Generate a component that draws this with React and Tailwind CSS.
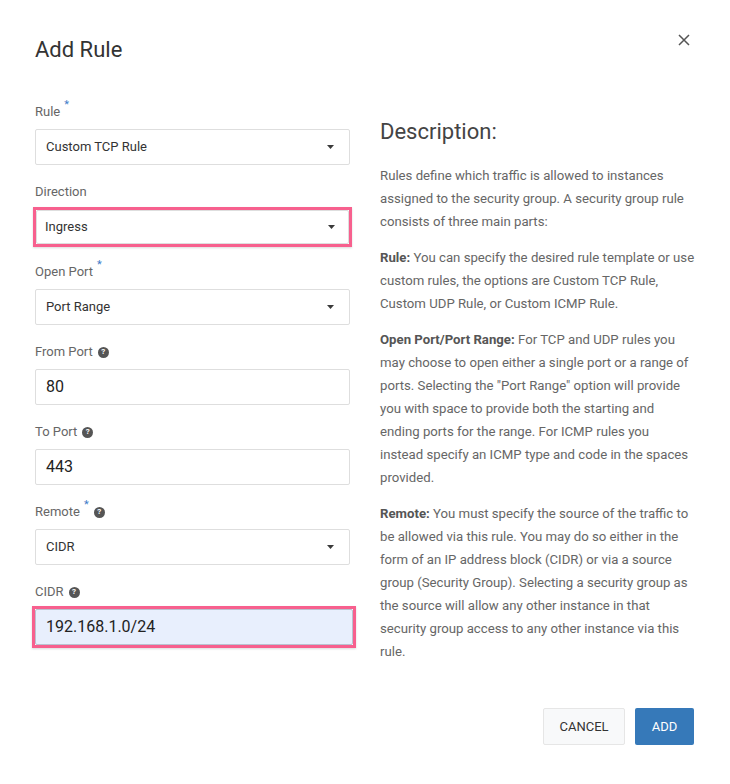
import React from "react";

const font = { fontFamily: "Roboto, 'Liberation Sans', sans-serif" };

function Caret() {
  return (
    <svg width="7" height="4" viewBox="0 0 7 4" className="shrink-0">
      <path d="M0 0 L7 0 L3.5 4 Z" fill="#3a3a3a" />
    </svg>
  );
}

function Help() {
  return (
    <span className="ml-[5px] inline-flex h-[11px] w-[11px] items-center justify-center rounded-full bg-[#555] text-[8px] font-bold leading-none text-white">
      ?
    </span>
  );
}

function Label({ text, required, help }) {
  return (
    <div className="flex h-[20px] items-center text-[13px] text-[#666]">
      <span>{text}</span>
      {required && (
        <span className="relative -top-[8px] ml-[4px] text-[11px] leading-none text-[#3d7cc9]">
          *
        </span>
      )}
      {help && <Help />}
    </div>
  );
}

function SelectBox({ value, small }) {
  return (
    <div
      className={`flex items-center justify-between rounded-[2px] border border-[#dedede] bg-white text-[13px] text-[#333] ${
        small ? "h-[34px] pl-[8px] pr-[13px]" : "h-[36px] pl-[10px] pr-[15px]"
      }`}
    >
      <span>{value}</span>
      <Caret />
    </div>
  );
}

function InputBox({ value, highlight }) {
  return (
    <div
      className={`flex h-[36px] items-center rounded-[2px] border pl-[10px] text-[16px] text-[#222] ${
        highlight ? "border-[#b9c2d0] bg-[#e8effd]" : "border-[#dedede] bg-white"
      }`}
    >
      {value}
    </div>
  );
}

function Field({ label, required, help, children, last }) {
  return (
    <div className={last ? "" : "mb-[17px]"}>
      <Label text={label} required={required} help={help} />
      <div className="mt-[7px]">{children}</div>
    </div>
  );
}

export default function App() {
  return (
    <div className="flex h-[784px] w-[730px] flex-col bg-white" style={font}>
      {/* Header */}
      <div className="flex items-start justify-between pl-[35px] pr-[40px] pt-[36px]">
        <h1 className="text-[22px] leading-[28px] text-[#333]">Add Rule</h1>
        <svg width="12" height="12" viewBox="0 0 12 12" className="-mt-[2px]">
          <path d="M1 1 L11 11 M11 1 L1 11" stroke="#555" strokeWidth="1.5" />
        </svg>
      </div>

      {/* Body */}
      <div className="mt-[38px] flex gap-[30px] px-[35px]">
        <div className="w-[315px] shrink-0">
          <Field label="Rule" required>
            <SelectBox value="Custom TCP Rule" />
          </Field>
          <Field label="Direction">
            <div className="-mx-[2px] -my-[2px] border-[3px] border-[#f7608e] shadow-[0_1px_2px_rgba(0,0,0,0.15)]">
              <SelectBox value="Ingress" small />
            </div>
          </Field>
          <Field label="Open Port" required>
            <SelectBox value="Port Range" />
          </Field>
          <Field label="From Port" help>
            <InputBox value="80" />
          </Field>
          <Field label="To Port" help>
            <InputBox value="443" />
          </Field>
          <Field label="Remote" required help>
            <SelectBox value="CIDR" />
          </Field>
          <Field label="CIDR" help last>
            <div className="-my-[3px] -ml-[3px] -mr-[6px] border-[3px] border-[#f7608e] shadow-[0_1px_2px_rgba(0,0,0,0.15)]">
              <InputBox value="192.168.1.0/24" highlight />
            </div>
          </Field>
        </div>

        <div className="w-[315px] shrink-0 pt-[16px] text-[13.2px] leading-[23px] text-[#666]">
          <h2 className="mb-[18px] text-[22px] leading-[28px] text-[#444]">Description:</h2>
          <p className="mb-[13px]">
            Rules define which traffic is allowed to instances assigned to the
            security group. A security group rule consists of three main parts:
          </p>
          <p className="mb-[13px]">
            <b className="text-[#555]">Rule:</b> You can specify the desired rule
            template or use custom rules, the options are Custom TCP Rule,
            Custom UDP Rule, or Custom ICMP Rule.
          </p>
          <p className="mb-[13px]">
            <b className="text-[#555]">Open Port/Port Range:</b> For TCP and UDP
            rules you may choose to open either a single port or a range of
            ports. Selecting the "Port Range" option will provide you with space
            to provide both the starting and ending ports for the range. For
            ICMP rules you instead specify an ICMP type and code in the spaces
            provided.
          </p>
          <p>
            <b className="text-[#555]">Remote:</b> You must specify the source of
            the traffic to be allowed via this rule. You may do so either in the
            form of an IP address block (CIDR) or via a source group (Security
            Group). Selecting a security group as the source will allow any
            other instance in that security group access to any other instance
            via this rule.
          </p>
        </div>
      </div>

      {/* Footer */}
      <div className="mt-auto flex justify-end gap-[10px] pb-[39px] pr-[36px]">
        <button className="h-[37px] w-[82px] rounded-[2px] border border-[#e6e6e6] bg-[#f8f9fa] text-[13px] text-[#333]">
          CANCEL
        </button>
        <button className="h-[37px] w-[59px] rounded-[2px] bg-[#3679b9] text-[13px] text-white">
          ADD
        </button>
      </div>
    </div>
  );
}
